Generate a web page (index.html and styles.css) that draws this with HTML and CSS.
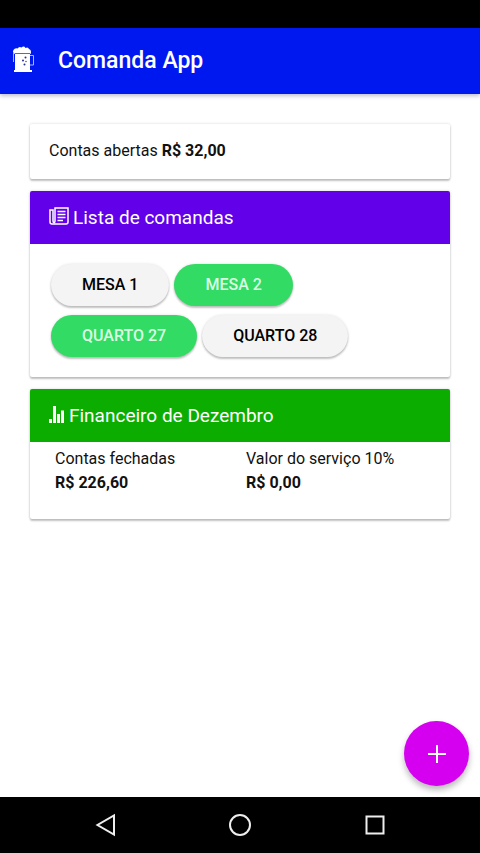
FILE: index.html
```html
<!DOCTYPE html>
<html lang="pt-BR">
<head>
<meta charset="utf-8">
<meta name="viewport" content="width=device-width, initial-scale=1">
<title>Comanda App</title>
<link rel="stylesheet" href="styles.css">
</head>
<body>
<div class="status-bar"></div>
<header class="toolbar">
  <svg class="logo" viewBox="0 0 24 28" aria-hidden="true">
    <path fill="#fff" d="M3 8Q0 7 1.500 4Q3 1.500 5.500 2.500Q7 0 9.500 1.500Q12 -.5 13.500 2Q16 .5 17 3Q20 4 18.500 8Z"/>
    <path fill="#fff" d="M3 7H18V24H20V26H2V24H3Z"/>
    <path fill="none" stroke="#aab4fb" d="M1.500 7V16M18 9.500H21.500V19H18"/>
    <path stroke="#5663d8" d="M3 7.500H18"/>
    <g fill="#27308f"><circle cx="13.500" cy="11.500" r="1"/><circle cx="11" cy="14.500" r="1"/><circle cx="14" cy="15.500" r=".7"/><circle cx="12.500" cy="18.500" r="1"/></g>
  </svg>
  <h1 class="title">Comanda App</h1>
</header>
<main class="content">
  <section class="card summary">Contas abertas <strong>R$ 32,00</strong></section>

  <section class="card">
    <h2 class="card-header orders">
      <svg class="icon icon-paper" viewBox="0 0 20 18" aria-hidden="true" fill="none" stroke="currentColor" stroke-width="1.500">
        <path d="M6 1H19V15Q19 17 17 17H3Q1 17 1 15V3H4V14Q4 15.500 5 15.500T6 14Z"/>
        <path d="M8.500 4.500H16.500M8.500 7.500H16.500M8.500 10.500H16.500M8.500 13.500H14"/>
      </svg>
      Lista de comandas
    </h2>
    <div class="tables">
      <button class="chip" type="button">Mesa 1</button>
      <button class="chip active" type="button">Mesa 2</button>
      <button class="chip active" type="button">Quarto 27</button>
      <button class="chip" type="button">Quarto 28</button>
    </div>
  </section>

  <section class="card">
    <h2 class="card-header finance">
      <svg class="icon icon-stats" viewBox="0 0 16 18" aria-hidden="true" fill="currentColor">
        <path d="M0 14H3V18H0ZM4 1H7V18H4ZM8 9H11V18H8ZM12 5.500H15V18H12Z"/>
      </svg>
      Financeiro de Dezembro
    </h2>
    <div class="totals">
      <div>Contas fechadas<br><strong>R$ 226,60</strong></div>
      <div>Valor do serviço 10%<br><strong>R$ 0,00</strong></div>
    </div>
  </section>
</main>
<button class="fab" type="button" aria-label="Adicionar">
  <svg viewBox="0 0 20 20" aria-hidden="true"><path fill="none" stroke="#fff" stroke-width="2" d="M10 1V19M1 10H19"/></svg>
</button>
<nav class="nav-bar">
  <button type="button" aria-label="Voltar"><svg viewBox="0 0 24 24"><path d="M21 2.500V21.500L4.500 12Z"/></svg></button>
  <button type="button" aria-label="Início"><svg viewBox="0 0 24 24"><circle cx="12" cy="12" r="10"/></svg></button>
  <button type="button" aria-label="Recentes"><svg viewBox="0 0 24 24"><path d="M3.500 3.500H20.500V20.500H3.500Z"/></svg></button>
</nav>
</body>
</html>
```
FILE: styles.css
```css
* {
  box-sizing: border-box;
}

body {
  display: flex;
  flex-direction: column;
  min-height: 100vh;
  margin: 0;
  background: #fff;
  color: #111;
  font: 16px/24px Roboto, sans-serif;
}

button {
  padding: 0;
  border: 0;
  font: inherit;
  cursor: pointer;
}

svg {
  display: block;
  flex: none;
}

.status-bar {
  height: 28px;
  background: #000;
}

.toolbar {
  display: flex;
  align-items: center;
  gap: 22px;
  padding: 16px 12px;
  background: #0018f0;
  box-shadow: 0 2px 4px rgba(0, 0, 80, 0.25);
}

.logo {
  width: 24px;
  height: 28px;
  margin-bottom: 2px;
}

.title {
  margin: 0;
  color: #fff;
  font-size: 23px;
  font-weight: 500;
  line-height: 34px;
}

.content {
  display: flex;
  flex: 1;
  flex-direction: column;
  gap: 12px;
  padding: 30px;
}

.card {
  overflow: hidden;
  border-radius: 2px;
  background: #fff;
  box-shadow: 0 2px 2px rgba(0, 0, 0, 0.22), 0 0 3px rgba(0, 0, 0, 0.16);
}

.summary {
  padding: 15px 19px 16px;
}

.card-header {
  display: flex;
  align-items: center;
  gap: 4px;
  margin: 0;
  padding: 14px 19px 13px;
  color: #fff;
  font-size: 19px;
  font-weight: 400;
  line-height: 26px;
}

.orders {
  background: #6200ea;
}

.finance {
  background: #0bae00;
}

.icon {
  height: 18px;
  margin-bottom: 4px;
}

.icon-paper {
  width: 20px;
}

.icon-stats {
  width: 16px;
}

.tables {
  display: flex;
  flex-wrap: wrap;
  gap: 9px 5px;
  padding: 20px 21px;
}

.chip {
  height: 42px;
  padding: 0 31px;
  border-radius: 21px;
  background: #f4f4f4;
  box-shadow: 0 2px 2px rgba(0, 0, 0, 0.22), 0 0 3px rgba(0, 0, 0, 0.12);
  color: #000;
  font-weight: 500;
  text-transform: uppercase;
}

.chip.active {
  background: #32db64;
  color: #d9ffe3;
}

.totals {
  display: grid;
  grid-template-columns: 1fr 1fr;
  padding: 5px 13px 24px 25px;
}

.fab {
  position: fixed;
  right: 11px;
  bottom: 67px;
  display: grid;
  place-items: center;
  width: 65px;
  height: 65px;
  border-radius: 50%;
  background: #d500f0;
  box-shadow: 0 4px 6px rgba(0, 0, 0, 0.28);
}

.fab svg {
  width: 20px;
  height: 20px;
}

.nav-bar {
  display: flex;
  justify-content: center;
  gap: 111px;
  padding: 16px 0;
  background: #000;
}

.nav-bar button {
  background: none;
}

.nav-bar svg {
  width: 24px;
  height: 24px;
  fill: none;
  stroke: #eee;
  stroke-width: 2;
}
```
